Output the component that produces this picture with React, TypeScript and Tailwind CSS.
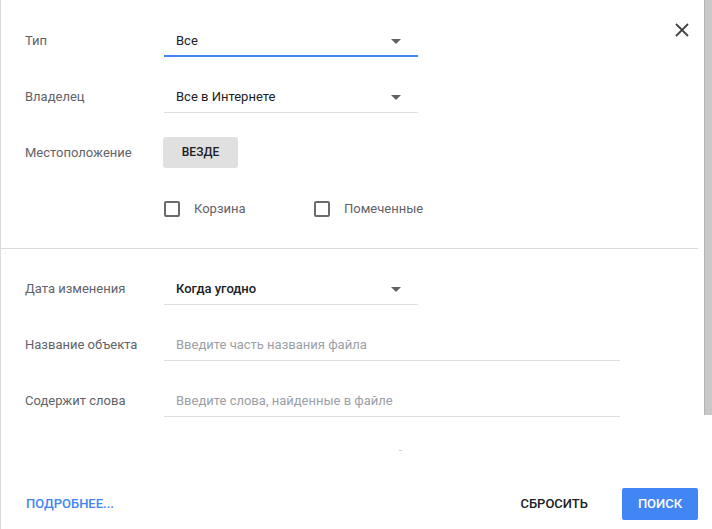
import React from 'react';

function Caret() {
  return (
    <svg width="10" height="5" viewBox="0 0 10 5" className="shrink-0">
      <path d="M0 0 L10 0 L5 5 Z" fill="#5f6368" />
    </svg>
  );
}

function Row({ label, children }: { label: string; children: React.ReactNode }) {
  return (
    <div className="flex h-[56px] items-center">
      <div className="w-[163px] shrink-0 pl-[24px] text-[13px] text-[#5f6368]">{label}</div>
      {children}
    </div>
  );
}

function Select({ value, active, bold }: { value: string; active?: boolean; bold?: boolean }) {
  return (
    <div
      className={
        active
          ? 'flex h-[32px] w-[254px] items-center justify-between border-b-2 border-[#4285f4] pl-[12px] pr-[17px] pt-[2px]'
          : 'flex h-[32px] w-[254px] items-center justify-between border-b border-[#e0e0e0] pl-[12px] pr-[17px] pt-[1px]'
      }
    >
      <span className={bold ? 'text-[13px] font-medium text-[#202124]' : 'text-[13px] text-[#202124]'}>{value}</span>
      <Caret />
    </div>
  );
}

function TextField({ placeholder }: { placeholder: string }) {
  return (
    <div className="flex h-[32px] w-[456px] items-center border-b border-[#e0e0e0] pl-[12px] pt-[1px]">
      <span className="text-[13px] text-[#9aa0a6]">{placeholder}</span>
    </div>
  );
}

function Checkbox({ label }: { label: string }) {
  return (
    <div className="flex w-[150px] items-center gap-[14px]">
      <div className="h-[16px] w-[16px] rounded-[2px] border-2 border-[#6b6b6b]" />
      <span className="text-[13px] text-[#5f6368]">{label}</span>
    </div>
  );
}

export default function App() {
  return (
    <div className="flex h-[529px] w-[712px] bg-white" style={{ fontFamily: 'Roboto, "Noto Sans", sans-serif' }}>
      <div className="relative flex w-[698px] shrink-0 flex-col border-l border-[#dadada]">
        <button className="absolute right-[9px] top-[23px] h-[14px] w-[14px]">
          <svg width="14" height="14" viewBox="0 0 14 14">
            <path d="M1 1 L13 13 M13 1 L1 13" stroke="#444" strokeWidth="1.8" />
          </svg>
        </button>

        <div className="flex flex-col pt-[13px]">
          <Row label="Тип">
            <Select value="Все" active />
          </Row>
          <Row label="Владелец">
            <Select value="Все в Интернете" />
          </Row>
          <Row label="Местоположение">
            <button className="h-[31px] w-[75px] -translate-x-[1px] -translate-y-[1px] rounded-[3px] bg-[#e0e0e0] text-[12px] font-medium uppercase text-[#202124]">
              Везде
            </button>
          </Row>
          <div className="flex h-[56px] items-center pl-[163px]">
            <Checkbox label="Корзина" />
            <Checkbox label="Помеченные" />
          </div>
        </div>

        <div className="mt-[11px] h-px bg-[#dadada]" />

        <div className="flex flex-col pt-[12px]">
          <Row label="Дата изменения">
            <Select value="Когда угодно" bold />
          </Row>
          <Row label="Название объекта">
            <TextField placeholder="Введите часть названия файла" />
          </Row>
          <Row label="Содержит слова">
            <TextField placeholder="Введите слова, найденные в файле" />
          </Row>
        </div>

        <div className="ml-[398px] mt-[21px] h-px w-[3px] bg-[#cfcfcf]" />

        <div className="mt-auto mb-[9px] flex h-[32px] items-center pl-[25px]">
          <span className="text-[13px] font-medium uppercase text-[#4285f4]">Подробнее...</span>
          <div className="ml-auto flex items-center">
            <span className="mr-[34px] text-[13px] font-medium uppercase text-[#202124]">Сбросить</span>
            <button className="h-[32px] w-[76px] rounded-[2px] bg-[#4285f4] text-[13px] font-medium uppercase text-white">
              Поиск
            </button>
          </div>
        </div>
      </div>
      <div className="ml-[6px] w-[8px] shrink-0">
        <div className="h-[415px] w-[8px] border-l border-[#b4b4b4] bg-[#c8c8c8]" />
      </div>
    </div>
  );
}
